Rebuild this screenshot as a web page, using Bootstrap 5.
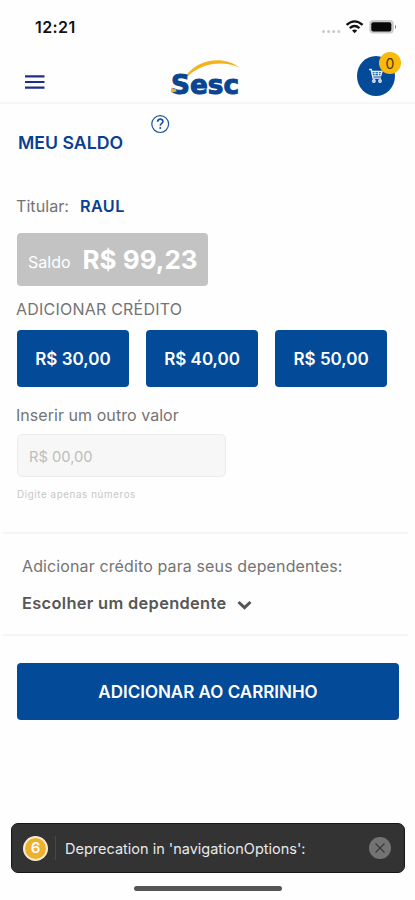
<!DOCTYPE html>
<html lang="pt-BR">
<head>
<meta charset="utf-8">
<meta name="viewport" content="width=device-width, initial-scale=1">
<title>Meu Saldo</title>
<link href="https://cdn.jsdelivr.net/npm/bootstrap@5.3.0/dist/css/bootstrap.min.css" rel="stylesheet">
<style>
:root{--navy:#034a98;--ink:#0b3f92}
body{font-family:Inter,"Liberation Sans",sans-serif;background:#fefefe;color:#747474}
.screen{width:415px;height:900px;overflow:hidden}
.status{height:52px;padding:2px 17px 0 35px;color:#111}
.clock{font-size:16px;font-weight:600;letter-spacing:.4px}
.topbar{height:52px;padding:0 20px 0 25px;border-bottom:2px solid #f6f6f6}
.topbar .menu{margin-top:9px;line-height:0}
.logo{margin-left:9px}
.cart{width:38px;height:40px;border-radius:50%;background:var(--navy);margin-bottom:2px}
.count{width:22px;height:22px;top:-4px;left:22px;background:#fab90c;color:#453a12;font-size:14px}
.ink{color:var(--ink);font-weight:600}
.title-row{height:78px;padding:10px 0 0 18px}
.title{font-size:17.7px;line-height:22px;margin-top:18px;width:133px}
.holder{height:51px;padding:13px 0 0 16px;font-size:16.2px;line-height:22px;gap:11px}
.holder .ink{letter-spacing:.4px}
.balance{width:191px;height:53px;margin-left:17px;padding:0 0 0 11px;background:#c3c3c3;color:#fff;border-radius:4px;gap:12px}
.balance span{font-size:16px;padding-top:5px}
.balance strong{font-size:26px;font-weight:700}
.label{font-size:16px;line-height:22px;padding-left:16px;margin:0}
.credit{margin-top:12px;letter-spacing:.22px}
.another{margin-top:16px;padding-top:1px;letter-spacing:.05px}
.blue{background:var(--navy);color:#fff;border:0;border-radius:4px;font-weight:600;height:57px}
.blue:hover{background:#023f83;color:#fff}
.amounts{margin:10px 28px 0 17px;gap:17px}
.amounts .blue{font-size:17px;padding:2px 0 0}
.other{width:209px;height:43px;margin:8px 0 0 17px;padding:2px 11px 0;background:#f7f7f7;border:1px solid #ececec;border-radius:5px;font-size:14.7px}
.other::placeholder{color:#bdbdbd;opacity:1}
.hint{font-size:9.8px;line-height:14px;letter-spacing:.6px;color:#c6c6c6;margin:11px 0 0 17px}
.dependents{height:104px;margin:30px 7px 0 3px;padding:21px 0 0 19px;border-top:2px solid #f5f5f5;border-bottom:2px solid #f5f5f5}
.dependents p{font-size:16px;line-height:22px;letter-spacing:.12px}
.choose{font-size:16.4px;line-height:22px;font-weight:600;color:#575757;margin-top:15px;gap:11px;letter-spacing:.33px}
.submit{margin:27px 16px 0 17px;padding-top:8px;font-size:17px}
.warning{height:50px;margin:103px 10px 0 11px;padding:0 13px 0 11px;background:#333;border:1px solid #161616;border-radius:7px;color:#e9e9e9;font-size:14.5px}
.warning .message{padding-top:2px}
.tally{width:25px;height:25px;border:2px solid #f8edcf;background:#efb02e;color:#fff;font-size:15px;font-weight:600}
.sep{width:1px;height:24px;background:#484848;margin:0 9px 0 7px}
.home{width:148px;height:5px;margin:13px 0 0 134px;border-radius:3px;background:#565656}
</style>
</head>
<body>
<main class="screen d-flex flex-column">
  <div class="status d-flex align-items-center justify-content-between">
    <span class="clock">12:21</span>
    <svg width="78" height="18" viewBox="0 0 78 18">
      <g fill="#c9c9c9"><circle cx="3.5" cy="13.5" r="1.5"/><circle cx="8.6" cy="13.5" r="1.5"/><circle cx="13.7" cy="13.5" r="1.5"/><circle cx="18.8" cy="13.5" r="1.5"/></g>
      <g fill="none" stroke="#111" stroke-width="2.3"><path d="M26.6 6.9Q34.6-.2 42.6 6.9"/><path d="M29.8 10.1Q34.6 5.9 39.4 10.1"/></g>
      <path d="M32 12.4Q34.6 10.4 37.2 12.4L34.6 15.2Z" fill="#111"/>
      <rect x="49.3" y="2" width="24.5" height="13.6" rx="4" fill="#c9c9c9"/>
      <rect x="51.3" y="4.2" width="20" height="9.2" rx="2" fill="#080808"/>
      <path d="M75 6.5q2.2 2.3 0 4.6z" fill="#777"/>
    </svg>
  </div>
  <header class="topbar d-flex align-items-center justify-content-between">
    <a class="menu" href="#" aria-label="Menu"><svg width="20" height="14" viewBox="0 0 20 14"><path d="M0 1.4h19.5M0 7h19.5M0 12.6h19.5" stroke="#1d2f8c" stroke-width="2.2"/></svg></a>
    <svg class="logo" width="74" height="46" viewBox="0 -3 74 46" role="img" aria-label="Sesc">
      <path d="M16.5 19C29 2 54-2 70.5 10.5C54 3.5 33 5.5 18.5 19.5Z" fill="#f6b21b"/>
      <text x="2" y="37" font-family="DejaVu Sans" font-weight="700" font-size="27" textLength="68" lengthAdjust="spacingAndGlyphs" fill="#0b4592" stroke="#0b4592" stroke-width="1">Sesc</text>
      <path d="M2.2 31l4.4 1.2 1.2 2.4-6 .8z" fill="#e3b72b"/>
    </svg>
    <a class="cart d-flex align-items-center justify-content-center position-relative text-decoration-none" href="#" aria-label="Carrinho">
      <svg width="16" height="18" viewBox="0 0 16 18" fill="none" stroke="#e8efff" stroke-width="1.4"><path d="M1 2.5h2.2l1.8 8.6h8M3.6 4.5h10.4l-1.4 4.4H4.6"/><path d="M4.2 6.7h9M7 4.4v4.6M10.5 4.4v4.6" stroke-width=".9"/><circle cx="5.9" cy="14" r="1.2"/><circle cx="12" cy="14" r="1.2"/></svg>
      <span class="count position-absolute rounded-circle d-flex align-items-center justify-content-center">0</span>
    </a>
  </header>

  <div class="title-row d-flex align-items-start">
    <h1 class="title ink mb-0">MEU SALDO</h1>
    <svg width="19" height="20" viewBox="0 0 19 20" fill="none" stroke="#1b559f"><circle cx="9.2" cy="10.1" r="8.4" stroke-width="1.2"/><path d="M6.6 7.8c.1-3.6 5.5-3.4 5.3-.3-.1 1.9-2.6 1.8-2.6 4.2" stroke-width="1.7"/><path d="M9.3 13.1v1.8" stroke-width="1.8"/></svg>
  </div>

  <div class="holder d-flex"><span>Titular:</span><span class="ink">RAUL</span></div>
  <div class="balance d-flex align-items-center"><span>Saldo</span><strong>R$ 99,23</strong></div>

  <p class="label credit">ADICIONAR CRÉDITO</p>
  <div class="amounts d-flex">
    <button class="btn blue flex-fill">R$ 30,00</button>
    <button class="btn blue flex-fill">R$ 40,00</button>
    <button class="btn blue flex-fill">R$ 50,00</button>
  </div>

  <p class="label another">Inserir um outro valor</p>
  <input class="form-control other" placeholder="R$ 00,00" aria-label="Outro valor">
  <p class="hint mb-0">Digite apenas números</p>

  <section class="dependents">
    <p class="mb-0">Adicionar crédito para seus dependentes:</p>
    <div class="choose d-flex align-items-center"><span>Escolher um dependente</span>
      <svg class="mt-1" width="15" height="10" viewBox="0 0 15 10"><path d="M1.5 2l6 5.7 6-5.7" fill="none" stroke="#555" stroke-width="3"/></svg></div>
  </section>
  <button class="btn blue submit">ADICIONAR AO CARRINHO</button>

  <div class="warning d-flex align-items-center">
    <span class="tally rounded-circle d-flex align-items-center justify-content-center">6</span>
    <span class="sep"></span>
    <span class="message flex-grow-1">Deprecation in 'navigationOptions':</span>
    <svg width="22" height="22" viewBox="0 0 22 22"><circle cx="11" cy="11" r="11" fill="#737373"/><path d="M6.5 6.5l9 9M15.5 6.5l-9 9" stroke="#3a3a3a" stroke-width="1.3"/></svg>
  </div>
  <div class="home"></div>
</main>
<script src="https://cdn.jsdelivr.net/npm/bootstrap@5.3.0/dist/js/bootstrap.bundle.min.js"></script>
</body>
</html>
